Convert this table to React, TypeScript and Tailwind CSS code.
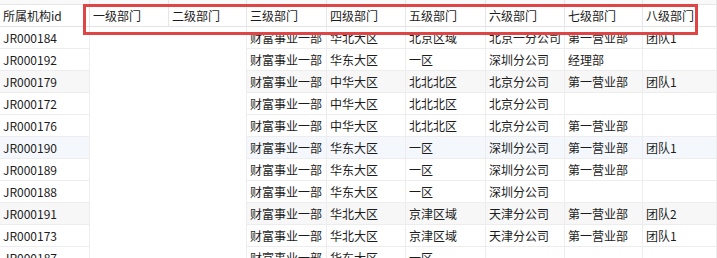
const headers = ["所属机构id", "一级部门", "二级部门", "三级部门", "四级部门", "五级部门", "六级部门", "七级部门", "八级部门"];

type Row = { id: string; cells: string[]; bg?: string };

const rows: Row[] = [
  { id: "JR000184", cells: ["财富事业一部", "华北大区", "北京区域", "北京一分公司", "第一营业部", "团队1"] },
  { id: "JR000192", cells: ["财富事业一部", "华东大区", "一区", "深圳分公司", "经理部", ""] },
  { id: "JR000179", cells: ["财富事业一部", "中华大区", "北北北区", "北京分公司", "第一营业部", "团队1"], bg: "bg-[#f7f7f7]" },
  { id: "JR000172", cells: ["财富事业一部", "中华大区", "北北北区", "北京分公司", "", ""] },
  { id: "JR000176", cells: ["财富事业一部", "中华大区", "北北北区", "北京分公司", "第一营业部", ""] },
  { id: "JR000190", cells: ["财富事业一部", "华东大区", "一区", "深圳分公司", "第一营业部", "团队1"], bg: "bg-[#f4f8fc]" },
  { id: "JR000189", cells: ["财富事业一部", "华东大区", "一区", "深圳分公司", "第一营业部", ""] },
  { id: "JR000188", cells: ["财富事业一部", "华东大区", "一区", "深圳分公司", "", ""] },
  { id: "JR000191", cells: ["财富事业一部", "华北大区", "京津区域", "天津分公司", "第一营业部", "团队2"], bg: "bg-[#f7f7f7]" },
  { id: "JR000173", cells: ["财富事业一部", "华北大区", "京津区域", "天津分公司", "第一营业部", "团队1"] },
  { id: "JR000187", cells: ["财富事业一部", "华东大区", "一区", "", "", ""] },
];

const grid = "grid grid-cols-[90px_79px_78px_80px_79px_80px_79px_78px_1fr]";

export default function App() {
  return (
    <div
      className="relative w-[717px] h-[258px] overflow-hidden bg-white text-[12px] leading-[22px] text-[#1c1c1c]"
      style={{ fontFamily: '"Microsoft YaHei", "Noto Sans CJK SC", sans-serif' }}
    >
      <div className={`${grid} h-[5px] border-b border-[#e6e6e6] bg-[#f9f9f9]`}>
        {headers.map((h) => (
          <div key={h} className="border-r border-[#e6e6e6]" />
        ))}
      </div>
      <div className={`${grid} h-[22px] border-b border-[#e3e3e3]`}>
        {headers.map((h) => (
          <div key={h} className="border-r border-[#e6e6e6] px-[3px] whitespace-nowrap overflow-hidden">
            {h}
          </div>
        ))}
      </div>
      {rows.map((r) => (
        <div key={r.id} className={`${grid} h-[22px] border-b border-[#ededed] ${r.bg ?? "bg-white"}`}>
          <div className="border-r border-[#ededed] px-[3px] whitespace-nowrap">{r.id}</div>
          <div className="bg-white" />
          <div className="bg-white border-r border-[#ededed]" />
          {r.cells.map((c, i) => (
            <div key={i} className="border-r border-[#ededed] px-[3px] whitespace-nowrap overflow-hidden">
              {c}
            </div>
          ))}
        </div>
      ))}
      <div className="absolute left-[83px] top-[4px] w-[615px] h-[31px] border-[3px] border-[#e04545]" />
    </div>
  );
}
